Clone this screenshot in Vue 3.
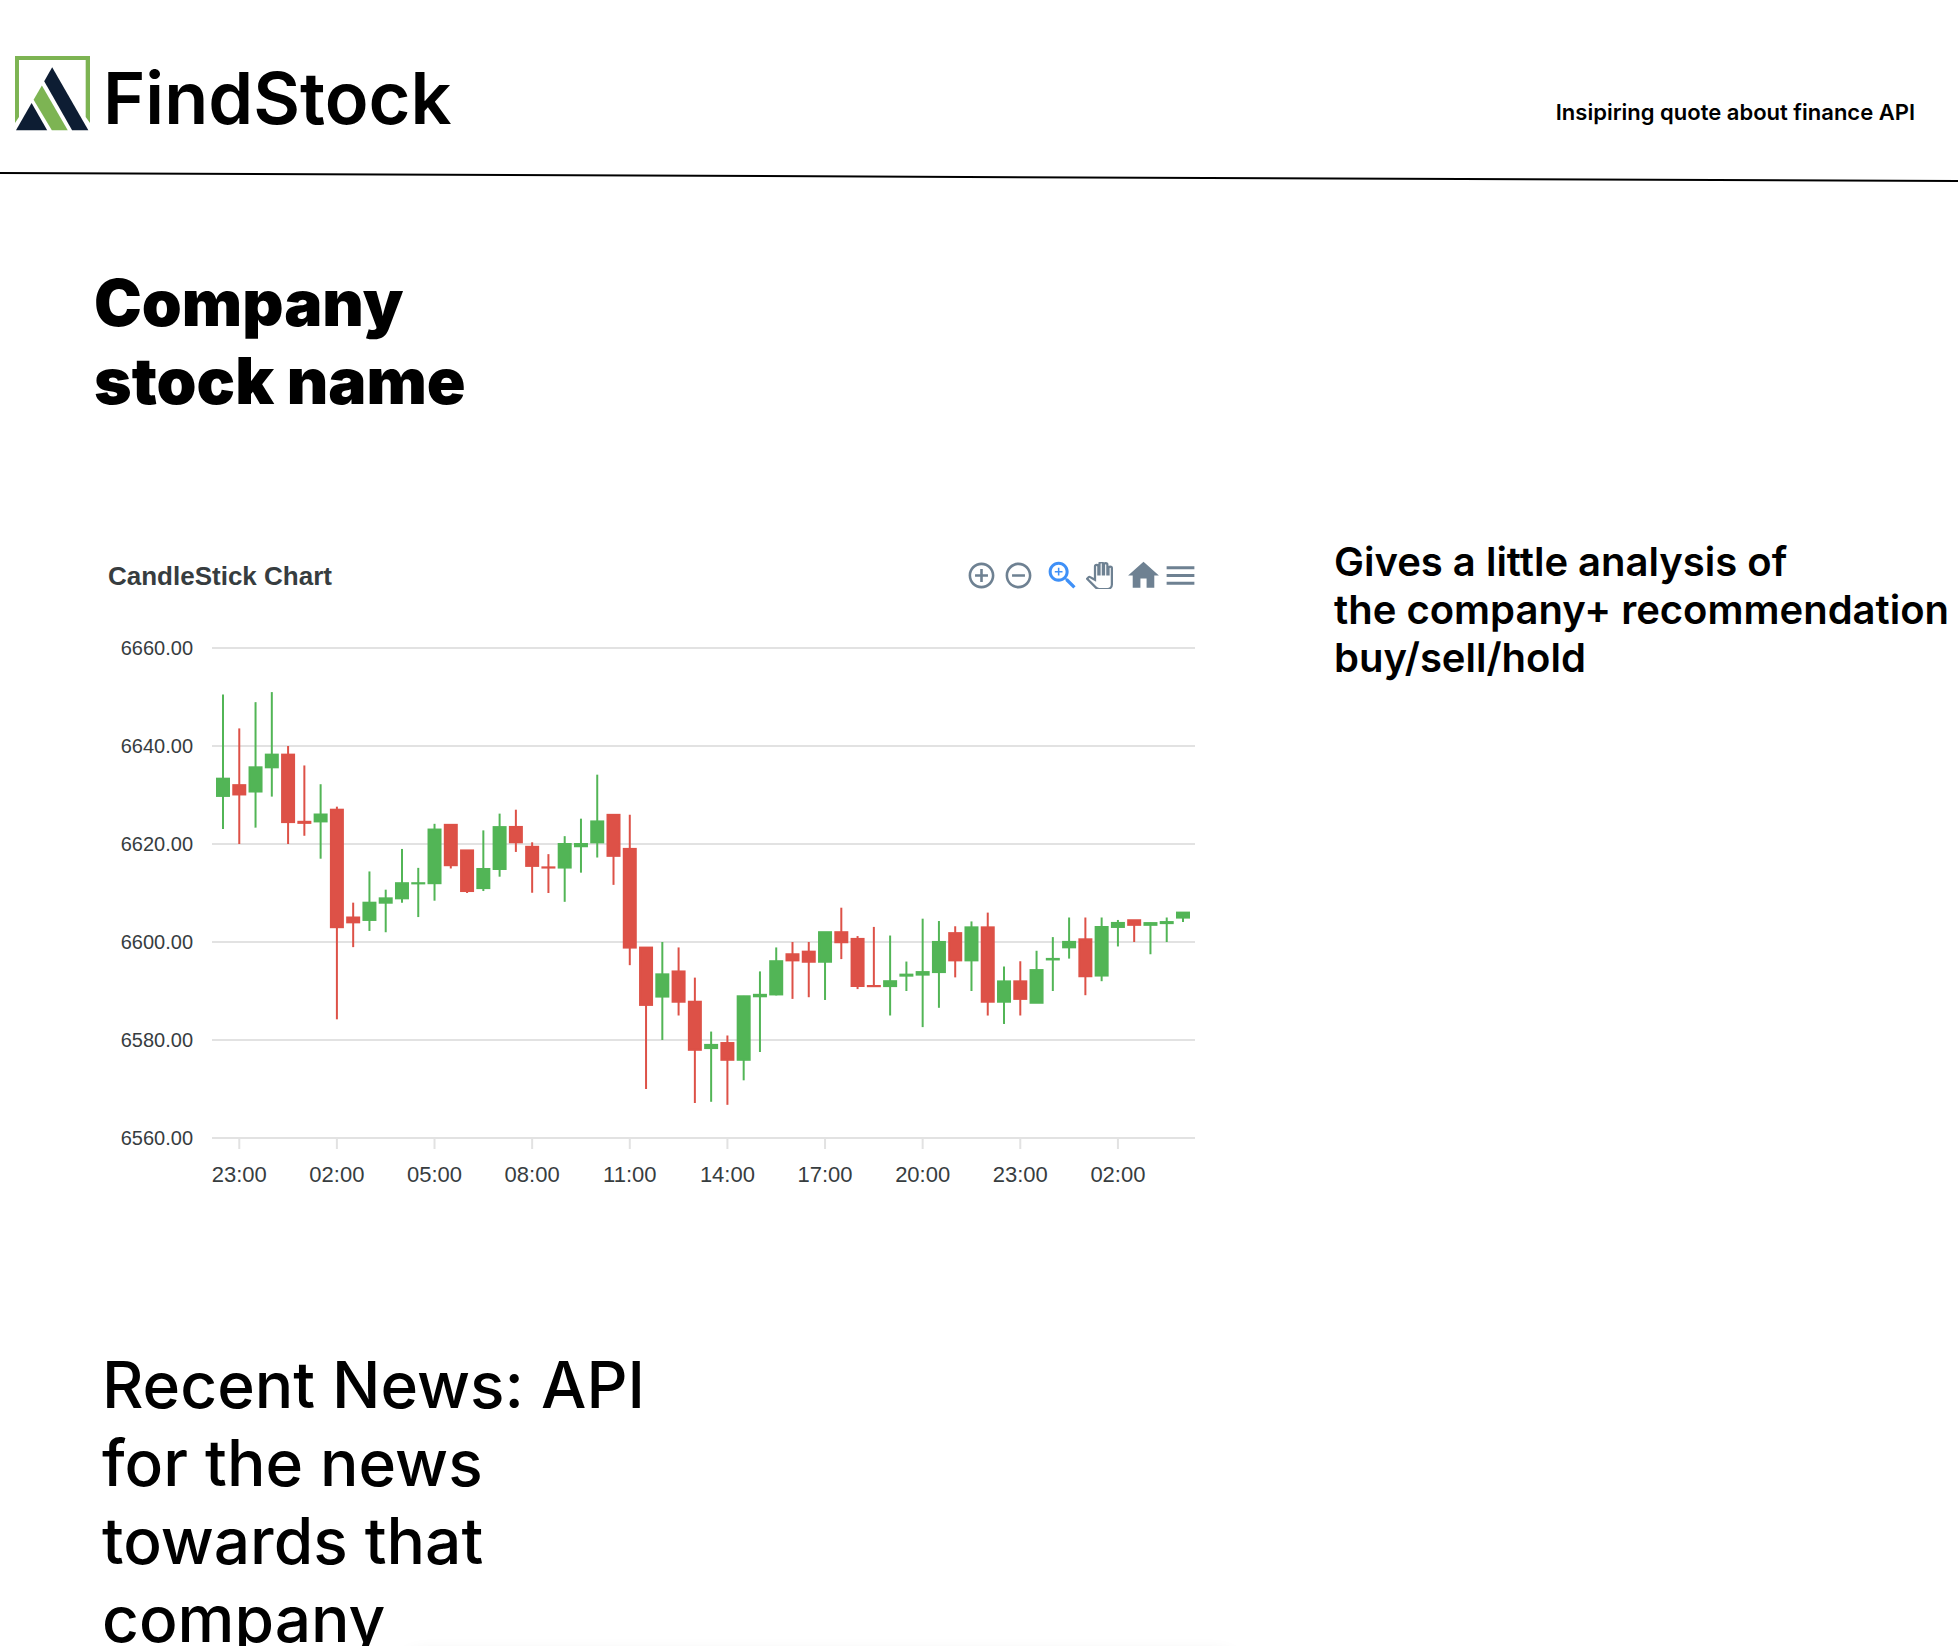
<script setup>
// Half-hour prices: [open, high, low, close]
const prices = [
  [6629.81, 6650.5, 6623.04, 6633.33],
  [6632.01, 6643.59, 6620, 6630.11],
  [6630.71, 6648.95, 6623.34, 6635.65],
  [6635.65, 6651, 6629.67, 6638.24],
  [6638.24, 6640, 6620, 6624.47],
  [6624.53, 6636.03, 6621.68, 6624.31],
  [6624.61, 6632.2, 6617, 6626.02],
  [6627, 6627.62, 6584.22, 6603.02],
  [6605, 6608.03, 6598.95, 6604.01],
  [6604.5, 6614.4, 6602.26, 6608.02],
  [6608.02, 6610.68, 6601.99, 6608.91],
  [6608.91, 6618.99, 6608.01, 6612],
  [6612, 6615.13, 6605.09, 6612],
  [6612, 6624.12, 6608.43, 6622.95],
  [6623.91, 6623.91, 6615, 6615.67],
  [6618.69, 6618.74, 6610, 6610.4],
  [6611, 6622.78, 6610.4, 6614.9],
  [6614.9, 6626.2, 6613.33, 6623.45],
  [6623.48, 6627, 6618.38, 6620.35],
  [6619.43, 6620.35, 6610.05, 6615.53],
  [6615.23, 6617.93, 6610, 6615.19],
  [6615.19, 6621.6, 6608.2, 6620],
  [6619.54, 6625.17, 6614.15, 6620],
  [6620.33, 6634.15, 6617.24, 6624.61],
  [6625.95, 6626, 6611.66, 6617.58],
  [6619, 6625.97, 6595.27, 6598.86],
  [6598.86, 6598.88, 6570, 6587.16],
  [6588.86, 6600, 6580, 6593.4],
  [6593.99, 6598.89, 6585, 6587.81],
  [6587.81, 6592.73, 6567.14, 6578],
  [6578.35, 6581.72, 6567.39, 6579],
  [6579.38, 6580.92, 6566.77, 6575.96],
  [6575.96, 6589, 6571.77, 6588.92],
  [6588.92, 6594, 6577.55, 6589.22],
  [6589.3, 6598.89, 6589.1, 6596.08],
  [6597.5, 6600, 6588.39, 6596.25],
  [6598.03, 6600, 6588.73, 6595.97],
  [6595.97, 6602.01, 6588.17, 6602],
  [6602, 6607, 6596.51, 6599.95],
  [6600.63, 6601.21, 6590.39, 6591.02],
  [6591.02, 6603.08, 6591, 6591],
  [6591, 6601.32, 6585, 6592],
  [6593.13, 6596.01, 6590, 6593.34],
  [6593.34, 6604.76, 6582.63, 6593.86],
  [6593.86, 6604.28, 6586.57, 6600.01],
  [6601.81, 6603.21, 6592.78, 6596.25],
  [6596.25, 6604.2, 6590, 6602.99],
  [6602.99, 6606, 6584.99, 6587.81],
  [6587.81, 6595, 6583.27, 6591.96],
  [6591.97, 6596.07, 6585, 6588.39],
  [6587.6, 6598.21, 6587.6, 6594.27],
  [6596.44, 6601, 6590, 6596.55],
  [6598.91, 6605, 6596.61, 6600.02],
  [6600.55, 6605, 6589.14, 6593.01],
  [6593.15, 6605, 6592, 6603.06],
  [6603.07, 6604.5, 6599.09, 6603.89],
  [6604.44, 6604.44, 6600, 6603.5],
  [6603.5, 6603.99, 6597.5, 6603.86],
  [6603.85, 6605, 6600, 6604.07],
  [6604.98, 6606, 6604.07, 6606],
]

const plot = { left: 116, right: 1099, top: 28, bottom: 518 }
const first = 127
const step = (1087 - first) / (prices.length - 1)
const xAt = (i) => first + i * step
const yAt = (p) => plot.top + ((6660 - p) / 100) * (plot.bottom - plot.top)

// A candle whose open equals its close still needs a sliver of body
const bodyHeight = (open, close) => Math.max(0.2, Math.abs(yAt(open) - yAt(close)))

const candles = prices.map(([open, high, low, close], i) => ({
  x: xAt(i),
  high: yAt(high),
  low: yAt(low),
  top: yAt(Math.max(open, close)),
  height: bodyHeight(open, close),
  kind: close >= open ? 'up' : 'down',
}))

const levels = [6660, 6640, 6620, 6600, 6580, 6560]
const hours = ['23:00', '02:00', '05:00', '08:00', '11:00', '14:00', '17:00', '20:00', '23:00', '02:00']
  .map((label, i) => ({ label, x: xAt(1 + i * 6) }))
</script>

<template>
  <div class="page">
    <header class="masthead">
      <div class="brand">
        <svg class="logo" viewBox="0 0 226 226" aria-hidden="true">
          <path class="leaf" d="M0 0H226V202L213 184V12H12V184L0 202Z" />
          <path class="navy" d="M112 34L221 224H172L88 76Z" />
          <path class="leaf" d="M81 89L159 224H111L56 132Z" />
          <path class="navy" d="M50 142L97 224H3Z" />
        </svg>
        <span class="brand-name">FindStock</span>
      </div>
      <p class="quote">Insipiring quote about finance API</p>
    </header>
    <svg class="rule" viewBox="0 0 100 10" preserveAspectRatio="none" aria-hidden="true">
      <line x1="0" y1="1" x2="100" y2="9" vector-effect="non-scaling-stroke" />
    </svg>

    <main>
      <h1 class="company">Company<br />stock name</h1>

      <div class="overview">
        <figure class="chart">
          <div class="chart-head">
            <figcaption class="chart-title">CandleStick Chart</figcaption>
            <div class="toolbar">
              <div class="group">
                <button type="button" aria-label="Zoom in">
                  <svg class="small" viewBox="0 0 24 24"><path d="M13 7h-2v4H7v2h4v4h2v-4h4v-2h-4V7zm-1-5C6.48 2 2 6.48 2 12s4.48 10 10 10 10-4.48 10-10S17.52 2 12 2zm0 18c-4.41 0-8-3.59-8-8s3.59-8 8-8 8 3.59 8 8-3.59 8-8 8z" /></svg>
                </button>
                <button type="button" aria-label="Zoom out">
                  <svg class="small" viewBox="0 0 24 24"><path d="M7 11v2h10v-2H7zm5-9C6.48 2 2 6.48 2 12s4.48 10 10 10 10-4.48 10-10S17.52 2 12 2zm0 18c-4.41 0-8-3.59-8-8s3.59-8 8-8 8 3.59 8 8-3.59 8-8 8z" /></svg>
                </button>
              </div>
              <div class="group">
                <button type="button" class="active" aria-label="Selection zoom" aria-pressed="true">
                  <svg viewBox="0 0 24 24"><path d="M15.5 14h-.79l-.28-.27C15.41 12.59 16 11.11 16 9.5 16 5.91 13.09 3 9.5 3S3 5.91 3 9.5 5.91 16 9.5 16c1.61 0 3.09-.59 4.23-1.57l.27.28v.79l5 4.99L20.49 19l-4.99-5zm-6 0C7.01 14 5 11.99 5 9.5S7.01 5 9.5 5 14 7.01 14 9.5 11.99 14 9.5 14zM12 10h-2v2H9v-2H7V9h2V7h1v2h2v1z" /></svg>
                </button>
                <button type="button" aria-label="Pan">
                  <svg class="hand" viewBox="0 0 24 24"><path d="M23 5.5V20c0 2.2-1.8 4-4 4h-7.3c-1.08 0-2.1-.43-2.85-1.19L1 14.83s1.26-1.23 1.3-1.25c.22-.19.49-.29.79-.29.22 0 .42.06.6.16.04.01 4.31 2.46 4.31 2.46V4c0-.83.67-1.5 1.5-1.5S11 3.17 11 4v7h1V1.5c0-.83.67-1.5 1.5-1.5S15 .67 15 1.5V11h1V2.5c0-.83.67-1.5 1.5-1.5s1.5.67 1.5 1.5V11h1V5.5c0-.83.67-1.5 1.5-1.5s1.5.67 1.5 1.5z" /></svg>
                </button>
              </div>
              <div class="group">
                <button type="button" aria-label="Reset zoom">
                  <svg viewBox="0 0 24 24"><path d="M10 20v-6h4v6h5v-8h3L12 3 2 12h3v8z" /></svg>
                </button>
                <button type="button" aria-label="Menu">
                  <svg viewBox="0 0 24 24"><path d="M3 18h18v-2H3v2zm0-5h18v-2H3v2zm0-7v2h18V6H3z" /></svg>
                </button>
              </div>
            </div>
          </div>

          <svg class="plot" viewBox="0 0 1110 580" role="img" aria-label="Stock price candlesticks">
            <g v-for="level in levels" :key="level">
              <line class="grid" :x1="plot.left" :x2="plot.right" :y1="yAt(level)" :y2="yAt(level)" />
              <text class="level" x="97" :y="yAt(level) + 7">{{ level.toFixed(2) }}</text>
            </g>
            <g v-for="hour in hours" :key="hour.x">
              <line class="grid" :x1="hour.x" :x2="hour.x" :y1="plot.bottom" :y2="plot.bottom + 11" />
              <text class="hour" :x="hour.x" y="562">{{ hour.label }}</text>
            </g>
            <g v-for="c in candles" :key="c.x" :class="c.kind">
              <line :x1="c.x" :x2="c.x" :y1="c.high" :y2="c.low" />
              <rect :x="c.x - 6" :y="c.top" width="12" :height="c.height" />
            </g>
          </svg>
        </figure>

        <p class="analysis">Gives a little analysis of<br />the company+ recommendation<br />buy/sell/hold</p>
      </div>

      <section class="news">
        <h2 class="news-title">Recent News: API for the news towards that company</h2>
        <div class="news-card"></div>
      </section>
    </main>
  </div>
</template>

<style>
body {
  margin: 0;
  background: #fff;
}
</style>

<style scoped>
.page {
  height: 100vh;
  overflow: hidden;
  background: #fff;
  color: #000;
  font-family: Inter, sans-serif;
}
h1,
h2,
p,
figure {
  margin: 0;
}
.masthead {
  display: flex;
  align-items: center;
  justify-content: space-between;
  padding: 54px 43px 30px 15px;
}
.brand {
  display: flex;
  align-items: flex-start;
  gap: 13px;
}
.logo {
  width: 75px;
  height: 75px;
  margin-top: 2px;
}
.leaf {
  fill: #7db453;
}
.navy {
  fill: #0d1d33;
}
.brand-name {
  font-size: 72px;
  line-height: 88px;
  font-weight: 600;
}
.quote {
  margin-top: 28px;
  font-size: 22px;
  line-height: 28px;
  font-weight: 600;
}
.rule {
  display: block;
  width: 100%;
  height: 10px;
  overflow: visible;
}
.rule line {
  stroke: #000;
  stroke-width: 2px;
}
.company {
  margin: 82px 0 0 94px;
  font-size: 64px;
  line-height: 78px;
  font-weight: 900;
}
.overview {
  display: grid;
  grid-template-columns: 1238fr 624fr;
  align-items: start;
  margin: 118px 0 0 96px;
}
.chart {
  margin: 19px 128px 0 0;
}
.chart-head {
  display: flex;
  align-items: center;
  justify-content: space-between;
  padding: 0 7px 26px 12px;
}
.chart-title {
  color: #373d3f;
  font-family: "Liberation Sans", Arial, sans-serif;
  font-size: 26px;
  line-height: 32px;
  font-weight: 700;
}
.toolbar {
  display: flex;
  gap: 7px;
}
.group {
  display: flex;
}
.toolbar button {
  display: flex;
  align-items: center;
  justify-content: center;
  width: 37px;
  height: 37px;
  padding: 0;
  border: 0;
  background: none;
}
.toolbar svg {
  width: 37px;
  height: 37px;
  fill: #6e8192;
}
.toolbar .small {
  width: 31px;
  height: 31px;
}
.toolbar .active svg {
  fill: #3f90f7;
}
.toolbar .hand {
  width: 27px;
  height: 27px;
  fill: #fff;
  stroke: #6e8192;
  stroke-width: 2px;
}
.plot {
  display: block;
  width: 100%;
  font-family: "Liberation Sans", Arial, sans-serif;
  fill: #373d3f;
}
.grid {
  stroke: #e2e2e2;
  stroke-width: 2px;
}
.level {
  font-size: 20px;
  text-anchor: end;
}
.hour {
  font-size: 22px;
  text-anchor: middle;
}
.up {
  fill: #52b556;
  stroke: #52b556;
  stroke-width: 2px;
}
.down {
  fill: #dd5147;
  stroke: #dd5147;
  stroke-width: 2px;
}
.analysis {
  font-size: 40px;
  line-height: 48px;
  font-weight: 600;
  white-space: nowrap;
}
.news {
  margin: 146px 0 0 102px;
}
.news-title {
  width: 560px;
  font-size: 64px;
  line-height: 78px;
  font-weight: 500;
}
.news-card {
  width: 828px;
  height: 240px;
  margin: -4px 0 0 304px;
  border-radius: 16px;
  background: #fff;
  box-shadow: 0 4px 20px rgba(0, 0, 0, 0.16);
}
</style>
